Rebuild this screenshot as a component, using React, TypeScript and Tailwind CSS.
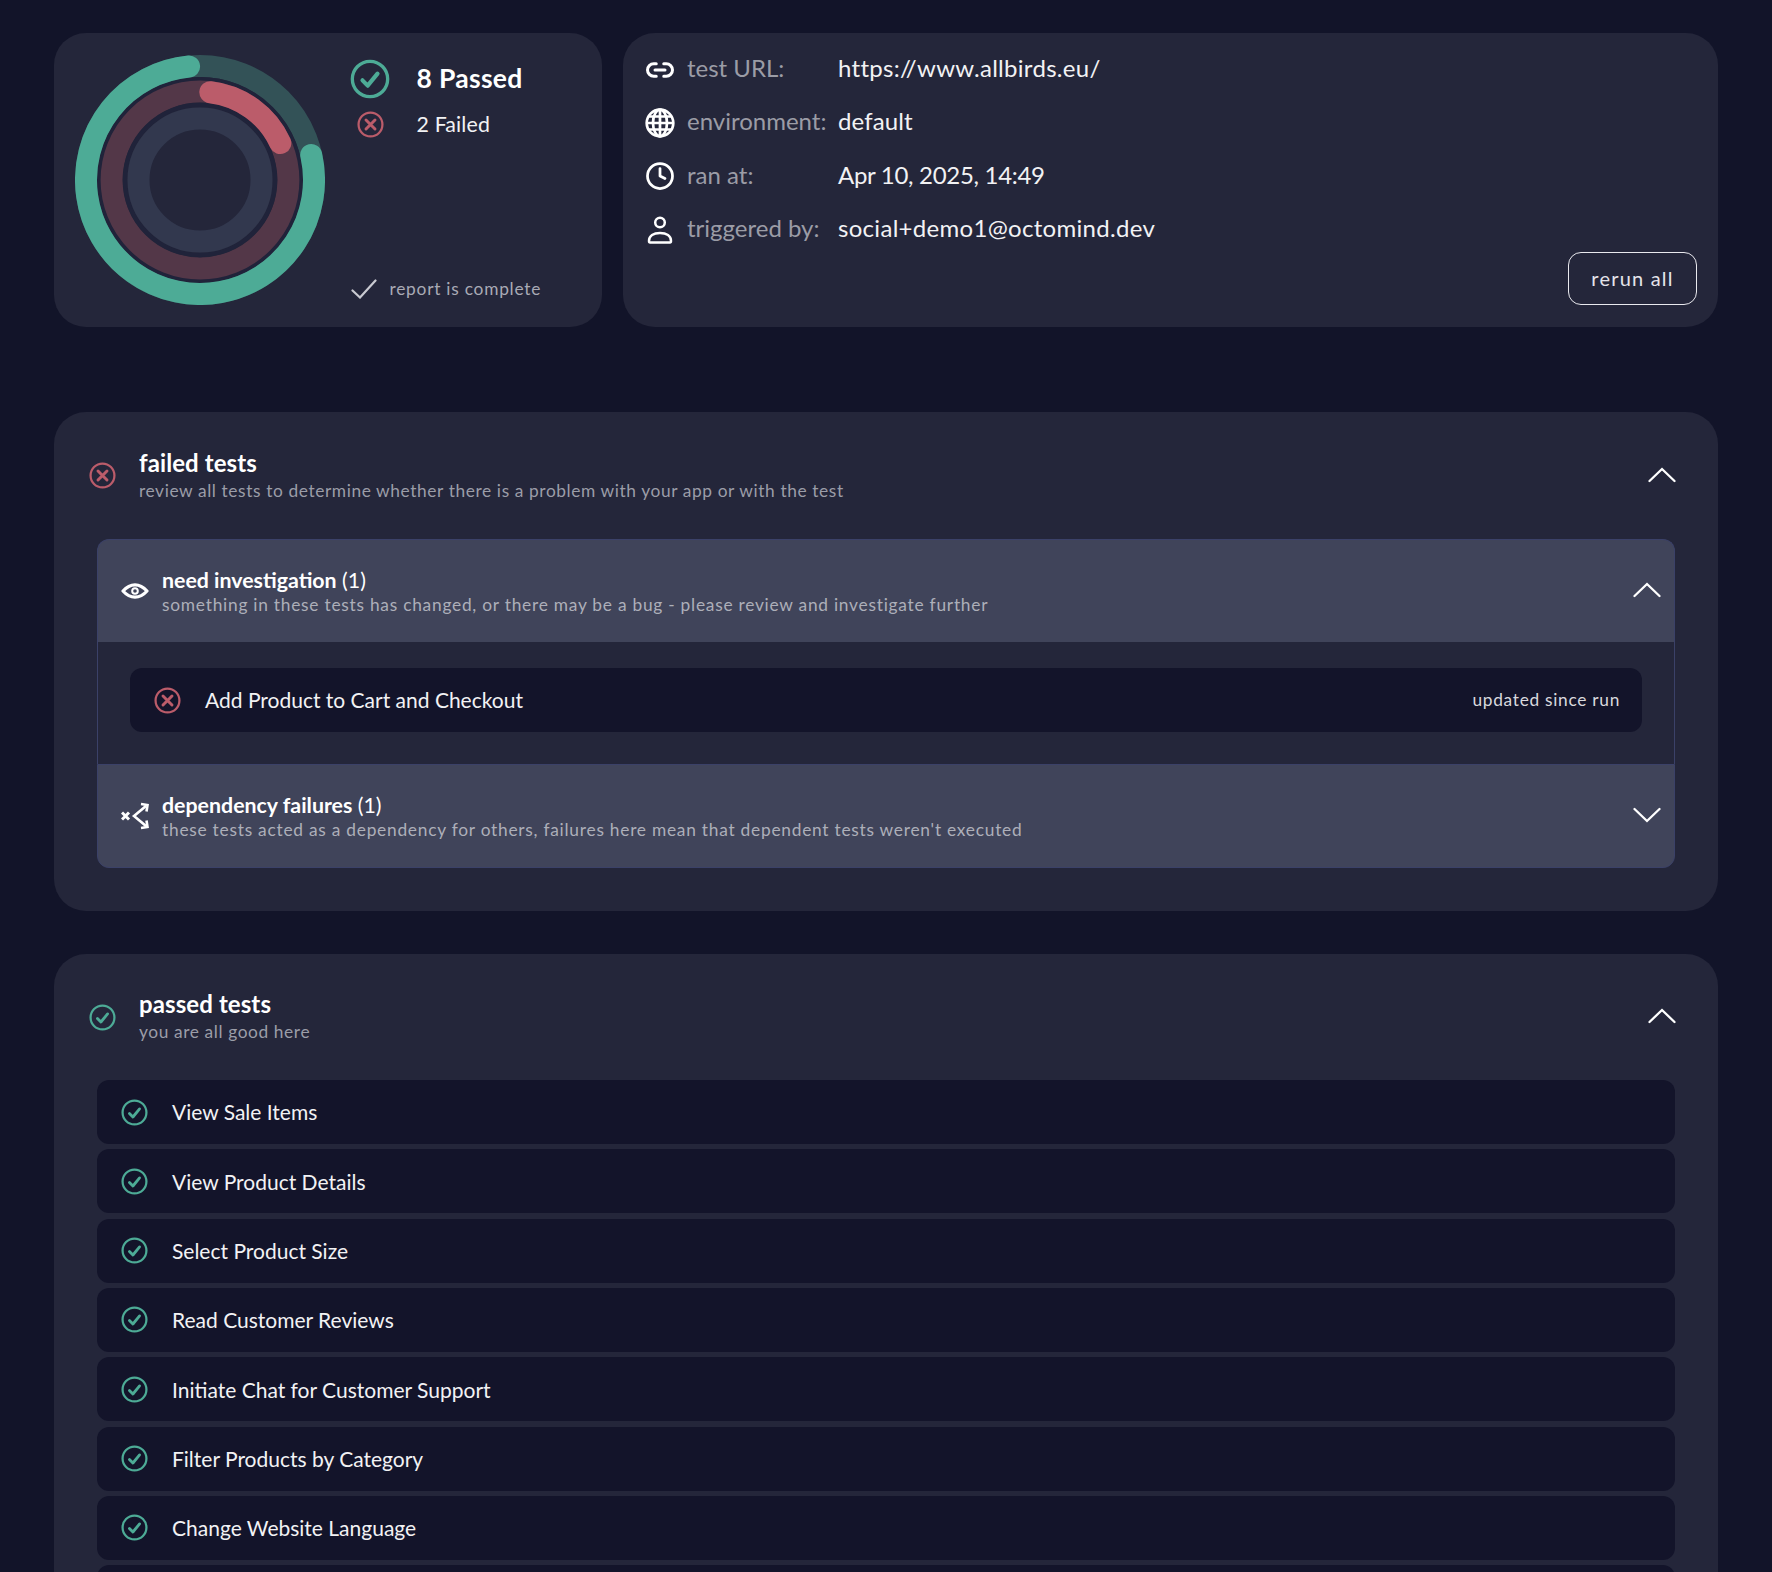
import { Clock, Link2 } from "lucide-react";

const FONT = "font-['Lato','Noto_Sans',sans-serif]";

const PASSED = [
  "View Sale Items",
  "View Product Details",
  "Select Product Size",
  "Read Customer Reviews",
  "Initiate Chat for Customer Support",
  "Filter Products by Category",
  "Change Website Language",
];

function arc(r: number, from: number, to: number) {
  const pt = (deg: number) => {
    const rad = ((deg - 90) * Math.PI) / 180;
    return `${125 + r * Math.cos(rad)} ${125 + r * Math.sin(rad)}`;
  };
  const large = to - from > 180 ? 1 : 0;
  return `M${pt(from)} A${r} ${r} 0 ${large} 1 ${pt(to)}`;
}

function Donut() {
  return (
    <svg width="250" height="250" viewBox="0 0 250 250" className="shrink-0">
      <circle cx="125" cy="125" r="114" fill="none" stroke="#335257" strokeWidth="22" />
      <circle cx="125" cy="125" r="101" fill="none" stroke="#20233a" strokeWidth="4" />
      <circle cx="125" cy="125" r="88.4" fill="none" stroke="#533748" strokeWidth="22" />
      <circle cx="125" cy="125" r="75" fill="none" stroke="#20233a" strokeWidth="4.5" />
      <circle cx="125" cy="125" r="61.5" fill="none" stroke="#32384e" strokeWidth="22" />
      <path d={arc(114, 77.3, 354.5)} fill="none" stroke="#4dab96" strokeWidth="22" strokeLinecap="round" />
      <path d={arc(88.4, 6.7, 65.3)} fill="none" stroke="#bb5c6a" strokeWidth="22" strokeLinecap="round" />
    </svg>
  );
}

function PassIcon({ size = 27 }: { size?: number }) {
  return (
    <svg width={size} height={size} viewBox="0 0 24 24" fill="none" stroke="#4dab96" strokeLinecap="round" strokeLinejoin="round" className="shrink-0">
      <circle cx="12" cy="12" r="10.600" strokeWidth="2" />
      <path d="M7.500 12.800 10.600 16 16.500 8.800" strokeWidth="2.500" />
    </svg>
  );
}

function FailIcon({ size = 27 }: { size?: number }) {
  return (
    <svg width={size} height={size} viewBox="0 0 24 24" fill="none" stroke="#bb5c6a" strokeLinecap="round" className="shrink-0">
      <circle cx="12" cy="12" r="10.600" strokeWidth="2" />
      <path d="M8 8l8 8M16 8l-8 8" strokeWidth="2.600" />
    </svg>
  );
}

function Chevron({ down }: { down?: boolean }) {
  return (
    <svg width="28" height="16" viewBox="0 0 28 16" fill="none" stroke="#fff" strokeWidth="2.300" strokeLinecap="round" className="mb-[2px] ml-auto shrink-0">
      <path d={down ? "M1.500 2 14 14 26.500 2" : "M1.500 14 14 2 26.500 14"} />
    </svg>
  );
}

function GlobeIcon() {
  return (
    <svg width="30" height="30" viewBox="0 0 30 30" fill="none" stroke="#fff" strokeWidth="2.700" className="shrink-0">
      <circle cx="15" cy="15" r="13.300" />
      <ellipse cx="15" cy="15" rx="7" ry="13.300" />
      <path d="M15 1.500v27M3 8.500h24M1.500 15h27M3 21.500h24" />
    </svg>
  );
}

function UserIcon() {
  return (
    <svg width="30" height="30" viewBox="0 0 30 30" fill="none" stroke="#fff" strokeWidth="2.500" strokeLinejoin="round" className="shrink-0">
      <circle cx="15" cy="7.500" r="4.800" />
      <path d="M5 27.500c-.800 0-1-.500-1-1.500 0-5 4.500-8 11-8s11 3 11 8c0 1-.200 1.500-1 1.500z" />
    </svg>
  );
}

function EyeIcon() {
  return (
    <svg width="28" height="18" viewBox="0 0 28 18" fill="none" stroke="#fff" className="shrink-0">
      <path d="M2 9C6 4.500 10 2.800 14 2.800S22 4.500 26 9C22 13.500 18 15.200 14 15.200S6 13.500 2 9z" strokeWidth="3.200" strokeLinejoin="round" />
      <circle cx="14" cy="9" r="2.800" strokeWidth="2" />
    </svg>
  );
}

function DependencyIcon() {
  return (
    <svg width="28" height="28" viewBox="0 0 28 28" fill="none" stroke="#fff" strokeWidth="2.600" className="shrink-0">
      <path d="M1 10.500 8 17.500M8 10.500 1 17.500" strokeWidth="3" />
      <path d="M25 4 13 14 25 24" />
      <path d="M20 2 26.500 3 25.500 9.500M20 26 26.500 25 25.500 18.500" strokeLinejoin="miter" />
    </svg>
  );
}

const META = [
  { icon: <Link2 size={32} color="#fff" strokeWidth={2.4} />, label: "test URL:", value: "https://www.allbirds.eu/", spacing: "tracking-[0.3px]" },
  { icon: <GlobeIcon />, label: "environment:", value: "default", spacing: "tracking-[0.1px]" },
  { icon: <Clock size={32} color="#fff" strokeWidth={2.2} />, label: "ran at:", value: "Apr 10, 2025, 14:49", spacing: "tracking-[-0.3px]" },
  { icon: <UserIcon />, label: "triggered by:", value: "social+demo1@octomind.dev", spacing: "tracking-[0.3px]" },
];

function TestRow({ name, right, failed }: { name: string; right?: string; failed?: boolean }) {
  return (
    <div className="flex h-16 shrink-0 items-center rounded-[12px] bg-[#13142a] pr-[22px] pl-[24px]">
      {failed ? <FailIcon /> : <PassIcon />}
      <span className="ml-[24px] text-[21px] text-[#f2f2f4]">{name}</span>
      {right && <span className="ml-auto text-[17.33px] tracking-[0.7px] text-[#d9d9de]">{right}</span>}
    </div>
  );
}

function SectionHeader({ icon, title, sub, short }: { icon: React.ReactNode; title: string; sub: string; short?: boolean }) {
  return (
    <div className={`-mx-[43px] flex items-center pr-[42px] pl-[34.5px] ${short ? "h-[126px]" : "h-[127px]"}`}>
      {icon}
      <div className="ml-[23.5px] flex flex-col">
        <span className="text-[24px] leading-[30px] font-bold tracking-[0.1px] text-white">{title}</span>
        <span className="text-[17.33px] leading-[26px] tracking-[0.6px] text-[#9b9da8]">{sub}</span>
      </div>
      <Chevron />
    </div>
  );
}

function GroupHeader({ icon, title, sub, open }: { icon: React.ReactNode; title: string; sub: string; open?: boolean }) {
  return (
    <div className={`flex items-center border-x border-t border-[#3b4168] bg-[#40445a] pr-[13px] pl-[23px] ${open ? "h-[103px] rounded-t-[12px]" : "h-[104px] rounded-b-[12px] border-b"}`}>
      {icon}
      <div className="ml-[13px] flex flex-col">
        <span className="text-[21.33px] leading-[26px] text-white">
          <b className="font-bold">{title}</b> (1)
        </span>
        <span className="text-[17.33px] leading-[23px] tracking-[0.75px] text-[#adafb9]">{sub}</span>
      </div>
      <Chevron down={!open} />
    </div>
  );
}

export default function App() {
  return (
    <div className={`${FONT} h-[1572px] overflow-hidden bg-[#121429] px-[54px] pt-[33px]`}>
      <div className="flex gap-[21px]">
        <div className="flex h-[294px] w-[548px] shrink-0 items-center rounded-[32px] bg-[#24263a] pl-[21px]">
          <Donut />
          <div className="ml-[25.5px] flex h-full flex-1 flex-col pt-[26px] pb-[25px]">
            <div className="flex items-center">
              <div className="flex w-[39px] justify-center"><PassIcon size={40} /></div>
              <span className="ml-[27px] text-[26.5px] font-bold tracking-[0.3px] text-white">8 Passed</span>
            </div>
            <div className="mt-[10px] flex items-center">
              <div className="flex w-[39px] justify-center"><FailIcon size={27} /></div>
              <span className="ml-[27px] text-[21.33px] tracking-[0.15px] text-[#f2f2f4]">2 Failed</span>
            </div>
            <div className="mt-auto flex items-center">
              <svg width="26" height="20" viewBox="0 0 26 20" fill="none" stroke="#c9cad1" strokeWidth="2.200" strokeLinecap="round" className="shrink-0">
                <path d="M1.500 11.500 9 18.500 24.500 1.500" />
              </svg>
              <span className="ml-[13px] text-[17.33px] tracking-[0.75px] text-[#a9aab5]">report is complete</span>
            </div>
          </div>
        </div>
        <div className="relative h-[294px] flex-1 rounded-[32px] bg-[#24263a] pt-[8.5px] pl-[22px]">
          {META.map((m) => (
            <div key={m.label} className="flex h-[53.33px] items-center">
              <div className="flex w-[30px] justify-center pt-[3px]">{m.icon}</div>
              <span className="ml-[12px] w-[151px] text-[24px] text-[#9b9ca6]">{m.label}</span>
              <span className={`text-[24px] text-[#f2f2f4] ${m.spacing}`}>{m.value}</span>
            </div>
          ))}
          <button className="absolute right-[21px] bottom-[22px] h-[53px] w-[129px] rounded-[13px] border border-[#e9e9ee] pb-[1px] text-[20px] tracking-[1.2px] text-[#e4e4ea]">
            rerun all
          </button>
        </div>
      </div>

      <section className="mt-[85px] rounded-[32px] bg-[#24263a] px-[43px] pb-[43px]">
        <SectionHeader
          icon={<FailIcon />}
          title="failed tests"
          sub="review all tests to determine whether there is a problem with your app or with the test"
        />
        <div className="flex flex-col">
          <GroupHeader
            open
            icon={<EyeIcon />}
            title="need investigation"
            sub="something in these tests has changed, or there may be a bug - please review and investigate further"
          />
          <div className="border-x border-[#3b4168] px-[32px] pt-[26px] pb-[32px]">
            <TestRow failed name="Add Product to Cart and Checkout" right="updated since run" />
          </div>
          <GroupHeader
            icon={<DependencyIcon />}
            title="dependency failures"
            sub="these tests acted as a dependency for others, failures here mean that dependent tests weren't executed"
          />
        </div>
      </section>

      <section className="mt-[43px] rounded-[32px] bg-[#24263a] px-[43px] pb-[43px]">
        <SectionHeader short icon={<PassIcon />} title="passed tests" sub="you are all good here" />
        <div className="flex flex-col gap-[5.33px]">
          {PASSED.map((name) => (
            <TestRow key={name} name={name} />
          ))}
          <div className="h-16 shrink-0 rounded-[12px] bg-[#13142a]" />
        </div>
      </section>
    </div>
  );
}
